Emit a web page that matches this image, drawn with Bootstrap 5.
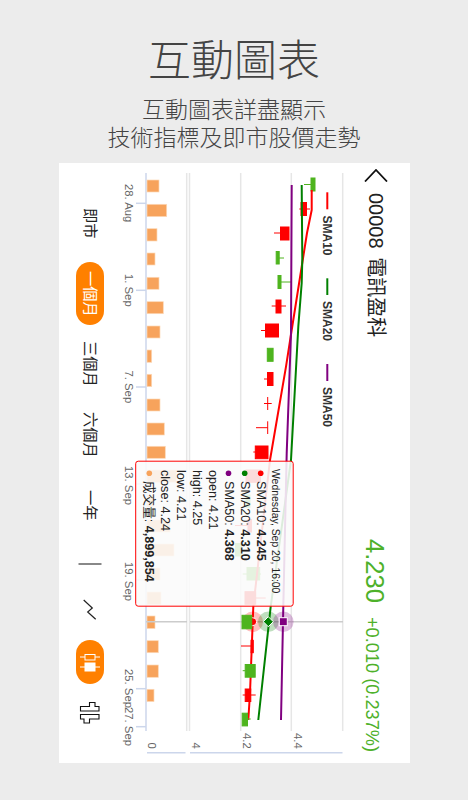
<!DOCTYPE html>
<html lang="zh-Hant">
<head>
<meta charset="utf-8">
<meta name="viewport" content="width=device-width, initial-scale=1">
<title>互動圖表</title>
<link href="https://cdn.jsdelivr.net/npm/bootstrap@5.3.0/dist/css/bootstrap.min.css" rel="stylesheet">
<style>
html,body{height:100%}
body{background:#ececec;font-family:"Liberation Sans","Noto Sans CJK TC",sans-serif;color:#222;overflow:hidden}
.promo{height:163px;color:#444;font-family:"Noto Sans CJK TC",sans-serif;font-weight:300;padding-top:21px}
.promo-title{font-size:43px;line-height:73px;margin:0;font-weight:300}
.promo-sub{font-size:23px;line-height:28px;margin:0}
.sheet{width:351px;height:600px;margin-left:59px;background:#fff}
.sidetext{writing-mode:vertical-rl;text-orientation:sideways}
.tabs{width:62px;padding-top:25px;font-size:15.3px}
.tabbox{width:100%;height:70.5px}
.tabbox-a{height:47px}.tabbox-b{height:44px}.tabbox-c{height:60px}.tabbox-d{height:42px}
.pill-on{width:28px;background:#ff8000;color:#fff;border-radius:14px}
.pill-text{height:63px}
.pill-icon{height:44px}
.plot{width:224px;height:600px;display:block}
.topbar{width:65px;height:600px}
.nameline{font-size:20px;line-height:24px;color:#222;margin-right:3px;padding-top:6px;word-spacing:3px}
.back{display:block;margin:0 0 11px}
.priceline{color:#4eb12a;padding-bottom:11px;margin-right:22px}
.pricebig{font-size:25.5px;line-height:26px;margin-bottom:14px}
.pricesmall{font-size:18.2px;line-height:26px}
.plot text{font-family:"Liberation Sans","Noto Sans CJK TC",sans-serif}
.tk{font-size:11.3px;fill:#666}
.lg{font-size:12px;font-weight:700;fill:#333}
.tt{font-size:12.6px;fill:#222}
.tt tspan{font-weight:700}
.gl{stroke:#e6e6e6;stroke-width:1.5}
.ax{stroke:#ccd6eb;stroke-width:1.5}
.vb rect{fill:#f7a35c;stroke:#fcd9b8;stroke-width:.7}
.cr{fill:#f00;stroke:#f00}
.cg{fill:#4eb41e;stroke:#4eb41e}
.wr{stroke:#f00;stroke-width:1}
.wg{stroke:#4eb41e;stroke-width:1}
.ln{fill:none;stroke-width:2;stroke-linejoin:round}
</style>
</head>
<body>
<header class="promo text-center">
  <h1 class="promo-title">互動圖表</h1>
  <p class="promo-sub">互動圖表詳盡顯示<br>技術指標及即市股價走勢</p>
</header>
<main class="sheet d-flex">
  <nav class="tabs d-flex flex-column flex-shrink-0">
    <div class="tabbox d-flex align-items-center justify-content-center"><span class="sidetext">即市</span></div>
    <div class="tabbox d-flex align-items-center justify-content-center"><span class="pill-on pill-text sidetext d-flex align-items-center justify-content-center">一個月</span></div>
    <div class="tabbox d-flex align-items-center justify-content-center"><span class="sidetext">三個月</span></div>
    <div class="tabbox d-flex align-items-center justify-content-center"><span class="sidetext">六個月</span></div>
    <div class="tabbox d-flex align-items-center justify-content-center"><span class="sidetext">一年</span></div>
    <div class="tabbox tabbox-a d-flex align-items-center justify-content-center">
      <svg width="24" height="4" viewBox="0 0 24 4"><line x1="0.5" y1="2" x2="23.5" y2="2" stroke="#888" stroke-width="2"/></svg>
    </div>
    <div class="tabbox tabbox-b d-flex align-items-center justify-content-center">
      <svg width="16" height="24" viewBox="0 0 16 24"><polyline points="1.7,2 10.3,10 5.7,14 13.7,21.3" fill="none" stroke="#222" stroke-width="1.2"/></svg>
    </div>
    <div class="tabbox tabbox-c d-flex align-items-center justify-content-center">
      <span class="pill-on pill-icon d-flex align-items-center justify-content-center">
        <svg width="22" height="22" viewBox="0 0 22 22"><g stroke="#fff" fill="none" stroke-width="1"><line x1="1" y1="6" x2="21" y2="6"/><rect x="6" y="3.5" width="10" height="5.5" fill="#ff8000"/><line x1="1" y1="16" x2="21" y2="16"/><rect x="6" y="12" width="10" height="8" fill="#fff"/></g></svg>
      </span>
    </div>
    <div class="tabbox tabbox-d d-flex align-items-center justify-content-center">
      <svg width="22" height="23" viewBox="0 0 22 23"><path d="M1.5 5.5H10.5V1.5H16V5.5H20V10H1.5ZM1.5 13.5H20V18H10.5V22H5V18H1.5Z" fill="#fff" stroke="#111" stroke-width="1.1"/></svg>
    </div>
  </nav>

  <svg class="plot flex-shrink-0" viewBox="121 163 224 600" xmlns="http://www.w3.org/2000/svg">
    <g class="gl">
      <line x1="186.7" y1="173" x2="186.7" y2="731"/>
      <line x1="189.5" y1="173" x2="189.5" y2="731"/>
      <line x1="240.7" y1="173" x2="240.7" y2="731"/>
      <line x1="291.3" y1="173" x2="291.3" y2="731"/>
      <line x1="342.7" y1="173" x2="342.7" y2="731"/>
    </g>
    <g class="ax">
      <line x1="146" y1="173" x2="146" y2="731"/>
      <line x1="136" y1="203.3" x2="146" y2="203.3"/>
      <line x1="136" y1="290.3" x2="146" y2="290.3"/>
      <line x1="136" y1="387" x2="146" y2="387"/>
      <line x1="136" y1="484" x2="146" y2="484"/>
      <line x1="136" y1="580" x2="146" y2="580"/>
      <line x1="136" y1="688.7" x2="146" y2="688.7"/>
      <line x1="136" y1="726.7" x2="146" y2="726.7"/>
      <line x1="147" y1="752.7" x2="185.5" y2="752.7"/>
      <line x1="190" y1="752.7" x2="342.5" y2="752.7"/>
    </g>
    <g class="tk">
      <text transform="translate(124.5,184) rotate(90)">28. Aug</text>
      <text transform="translate(124.5,274) rotate(90)">1. Sep</text>
      <text transform="translate(124.5,370.5) rotate(90)">7. Sep</text>
      <text transform="translate(124.5,466) rotate(90)">13. Sep</text>
      <text transform="translate(124.5,562) rotate(90)">19. Sep</text>
      <text transform="translate(124.5,669) rotate(90)">25. Sep</text>
      <text transform="translate(124.5,707) rotate(90)">27. Sep</text>
      <text transform="translate(148,742.5) rotate(90)">0</text>
      <text transform="translate(192,742.5) rotate(90)">4</text>
      <text transform="translate(243,733) rotate(90)">4.2</text>
      <text transform="translate(294,733) rotate(90)">4.4</text>
    </g>
    <g class="vb">
      <rect x="147" y="180" width="12" height="12"/>
      <rect x="147" y="204.3" width="19.7" height="12.3"/>
      <rect x="147" y="228.7" width="10" height="12.3"/>
      <rect x="147" y="253" width="8" height="12"/>
      <rect x="147" y="277.3" width="12" height="12"/>
      <rect x="147" y="301.7" width="16.3" height="12"/>
      <rect x="147" y="326" width="13" height="12"/>
      <rect x="147" y="350" width="4.7" height="12.3"/>
      <rect x="147" y="374.3" width="4.7" height="12.3"/>
      <rect x="147" y="399" width="13" height="12"/>
      <rect x="147" y="423" width="17.3" height="12"/>
      <rect x="147" y="446.3" width="18.3" height="12"/>
      <rect x="147" y="470" width="29.7" height="12.3"/>
      <rect x="147" y="495" width="6" height="12.3"/>
      <rect x="147" y="520" width="23" height="12"/>
      <rect x="147" y="544" width="27" height="12"/>
      <rect x="147" y="568" width="13" height="12"/>
      <rect x="147" y="592" width="14" height="12.5"/>
      <rect x="147" y="616" width="8" height="12.5"/>
      <rect x="147" y="640.7" width="11.3" height="12"/>
      <rect x="147" y="665" width="11.3" height="12.3"/>
      <rect x="147" y="689.3" width="7" height="12.3"/>
    </g>
    <line x1="146" y1="621.7" x2="187" y2="621.7" stroke="#ccc" stroke-width="1.4"/>
    <line x1="190" y1="621.7" x2="343" y2="621.7" stroke="#ccc" stroke-width="1.4"/>

    <g>
      <line class="wg" x1="304" y1="184.5" x2="311" y2="184.5"/><rect class="cg" x="311" y="178" width="4" height="13"/>
      <line class="wr" x1="299.3" y1="209" x2="310" y2="209"/><rect class="cr" x="301" y="202.5" width="5.5" height="13"/>
      <line class="wr" x1="274" y1="233" x2="281" y2="233"/><rect class="cr" x="280.5" y="227" width="8.5" height="13"/>
      <line class="wg" x1="279" y1="258" x2="284" y2="258"/><rect class="cg" x="276.2" y="251.5" width="3" height="12.5"/>
      <line class="wg" x1="280" y1="282" x2="291.7" y2="282"/><rect class="cg" x="278" y="275.5" width="3" height="13"/>
      <line class="wr" x1="271.7" y1="306" x2="286" y2="306"/><rect class="cr" x="276" y="300" width="5" height="13"/>
      <line class="wr" x1="261" y1="330.5" x2="266" y2="330.5"/><rect class="cr" x="265.5" y="324" width="13" height="13"/>
      <rect class="cg" x="267.3" y="348.3" width="5.8" height="13"/>
      <line class="wr" x1="264" y1="379" x2="268" y2="379"/><rect class="cr" x="267.5" y="372.5" width="5.5" height="13"/>
      <line class="wr" x1="264" y1="403.5" x2="271.7" y2="403.5"/><line class="wr" x1="267.7" y1="397" x2="267.7" y2="410"/>
      <line class="wr" x1="256" y1="427.7" x2="267.7" y2="427.7"/><line class="wr" x1="267.7" y1="421.3" x2="267.7" y2="434"/>
      <line class="wr" x1="253.3" y1="452" x2="256" y2="452"/><rect class="cr" x="255.3" y="446" width="12.7" height="12.7"/>
      <rect class="cr" x="246" y="470" width="14.5" height="12.3"/>
      <rect class="cg" x="246" y="495" width="4" height="12.3"/>
      <line class="wr" x1="235" y1="525.5" x2="251.7" y2="525.5"/><rect class="cr" x="248" y="519.5" width="3.5" height="12.5"/>
      <rect class="cg" x="235.5" y="543.5" width="6" height="12.5"/>
      <line class="wg" x1="242.7" y1="574" x2="261" y2="574"/><rect class="cg" x="247" y="567.5" width="12.7" height="12.5"/>
      <line class="wr" x1="255" y1="598" x2="265.7" y2="598"/><rect class="cr" x="245" y="591.7" width="10.7" height="12.5"/>
    </g>

    <polyline class="ln" stroke="#f00" points="311.7,190 311.7,210 307,233 300.7,273 291.7,330 286,366.7 270,460 253.3,606.7 250,693 248.3,720"/>
    <polyline class="ln" stroke="#008000" points="301.7,185 302.3,260 301.7,283 298.3,326.7 291,460 270.7,606.7 258.3,720"/>
    <polyline class="ln" stroke="#800080" points="291.7,185 291,333 286.7,453.3 283.3,606.7 281,720"/>

    <g>
      <circle cx="252.7" cy="621.7" r="10.3" fill="#f00" opacity=".25"/>
      <circle cx="268.3" cy="621.7" r="10.3" fill="#008000" opacity=".25"/>
      <circle cx="283.3" cy="621.7" r="10.3" fill="#800080" opacity=".25"/>
      <circle cx="252.7" cy="621.7" r="4" fill="#f00" stroke="#fff" stroke-width="1"/>
      <path d="M268.3 616.7L273.3 621.7L268.3 626.7L263.3 621.7Z" fill="#008000" stroke="#fff" stroke-width="1"/>
      <rect x="279.3" y="617.7" width="8" height="8" fill="#800080" stroke="#fff" stroke-width="1"/>
      <rect class="cg" x="242" y="615.3" width="9.7" height="13.5"/>
      <line class="wr" x1="241" y1="646" x2="251" y2="646"/><rect class="cr" x="251" y="640.3" width="2.3" height="12.4"/>
      <line class="wg" x1="242.7" y1="670.7" x2="245.5" y2="670.7"/><rect class="cg" x="245.2" y="664.5" width="10" height="12.7"/>
      <line class="wr" x1="242.7" y1="695" x2="255.7" y2="695"/><rect class="cr" x="245.2" y="689" width="5.6" height="12.5"/>
      <line class="wg" x1="247" y1="719" x2="250.7" y2="719"/><rect class="cg" x="242.2" y="713.2" width="5.3" height="12.7"/>
    </g>

    <g class="lg">
      <line x1="327.3" y1="192.3" x2="327.3" y2="209.3" stroke="#f00" stroke-width="2"/>
      <text transform="translate(322.8,215.5) rotate(90)">SMA10</text>
      <line x1="327.3" y1="278.3" x2="327.3" y2="295" stroke="#008000" stroke-width="2"/>
      <text transform="translate(322.8,301) rotate(90)">SMA20</text>
      <line x1="327.3" y1="364" x2="327.3" y2="381" stroke="#800080" stroke-width="2"/>
      <text transform="translate(322.8,387) rotate(90)">SMA50</text>
    </g>

    <rect x="135.7" y="461.2" width="157.5" height="145" rx="2.5" fill="#fafafa" fill-opacity=".88" stroke="#f00" stroke-width="1"/>
    <g class="tt">
      <text transform="translate(272,469) rotate(90)" style="font-size:10.4px">Wednesday, Sep 20, 16:00</text>
      <circle cx="260.7" cy="473.3" r="2.8" fill="#f00"/>
      <text transform="translate(256.7,481) rotate(90)">SMA10: <tspan>4.245</tspan></text>
      <circle cx="244.7" cy="473.3" r="2.8" fill="#008000"/>
      <text transform="translate(240.6,481) rotate(90)">SMA20: <tspan>4.310</tspan></text>
      <circle cx="228.5" cy="473.3" r="2.8" fill="#800080"/>
      <text transform="translate(224.5,481) rotate(90)">SMA50: <tspan>4.368</tspan></text>
      <text transform="translate(208.8,470) rotate(90)">open: 4.21</text>
      <text transform="translate(192.8,470) rotate(90)">high: 4.25</text>
      <text transform="translate(177,470) rotate(90)">low: 4.21</text>
      <text transform="translate(161.2,470) rotate(90)">close: 4.24</text>
      <circle cx="149.3" cy="473.3" r="2.8" fill="#f7a35c"/>
      <text transform="translate(145.3,481) rotate(90)">成交量: <tspan>4,899,854</tspan></text>
    </g>
  </svg>

  <section class="topbar sidetext d-flex justify-content-between flex-shrink-0">
    <div class="nameline d-flex align-items-center">
      <svg width="24" height="13" viewBox="0 0 24 13" class="back flex-shrink-0"><polyline points="1,12.5 12,1 23,12.5" fill="none" stroke="#111" stroke-width="1.8"/></svg>
      <span>00008 電訊盈科</span>
    </div>
    <div class="priceline d-flex align-items-baseline">
      <span class="pricebig">4.230</span>
      <span class="pricesmall">+0.010 (0.237%)</span>
    </div>
  </section>
</main>
<script src="https://cdn.jsdelivr.net/npm/bootstrap@5.3.0/dist/js/bootstrap.bundle.min.js"></script>
</body>
</html>
